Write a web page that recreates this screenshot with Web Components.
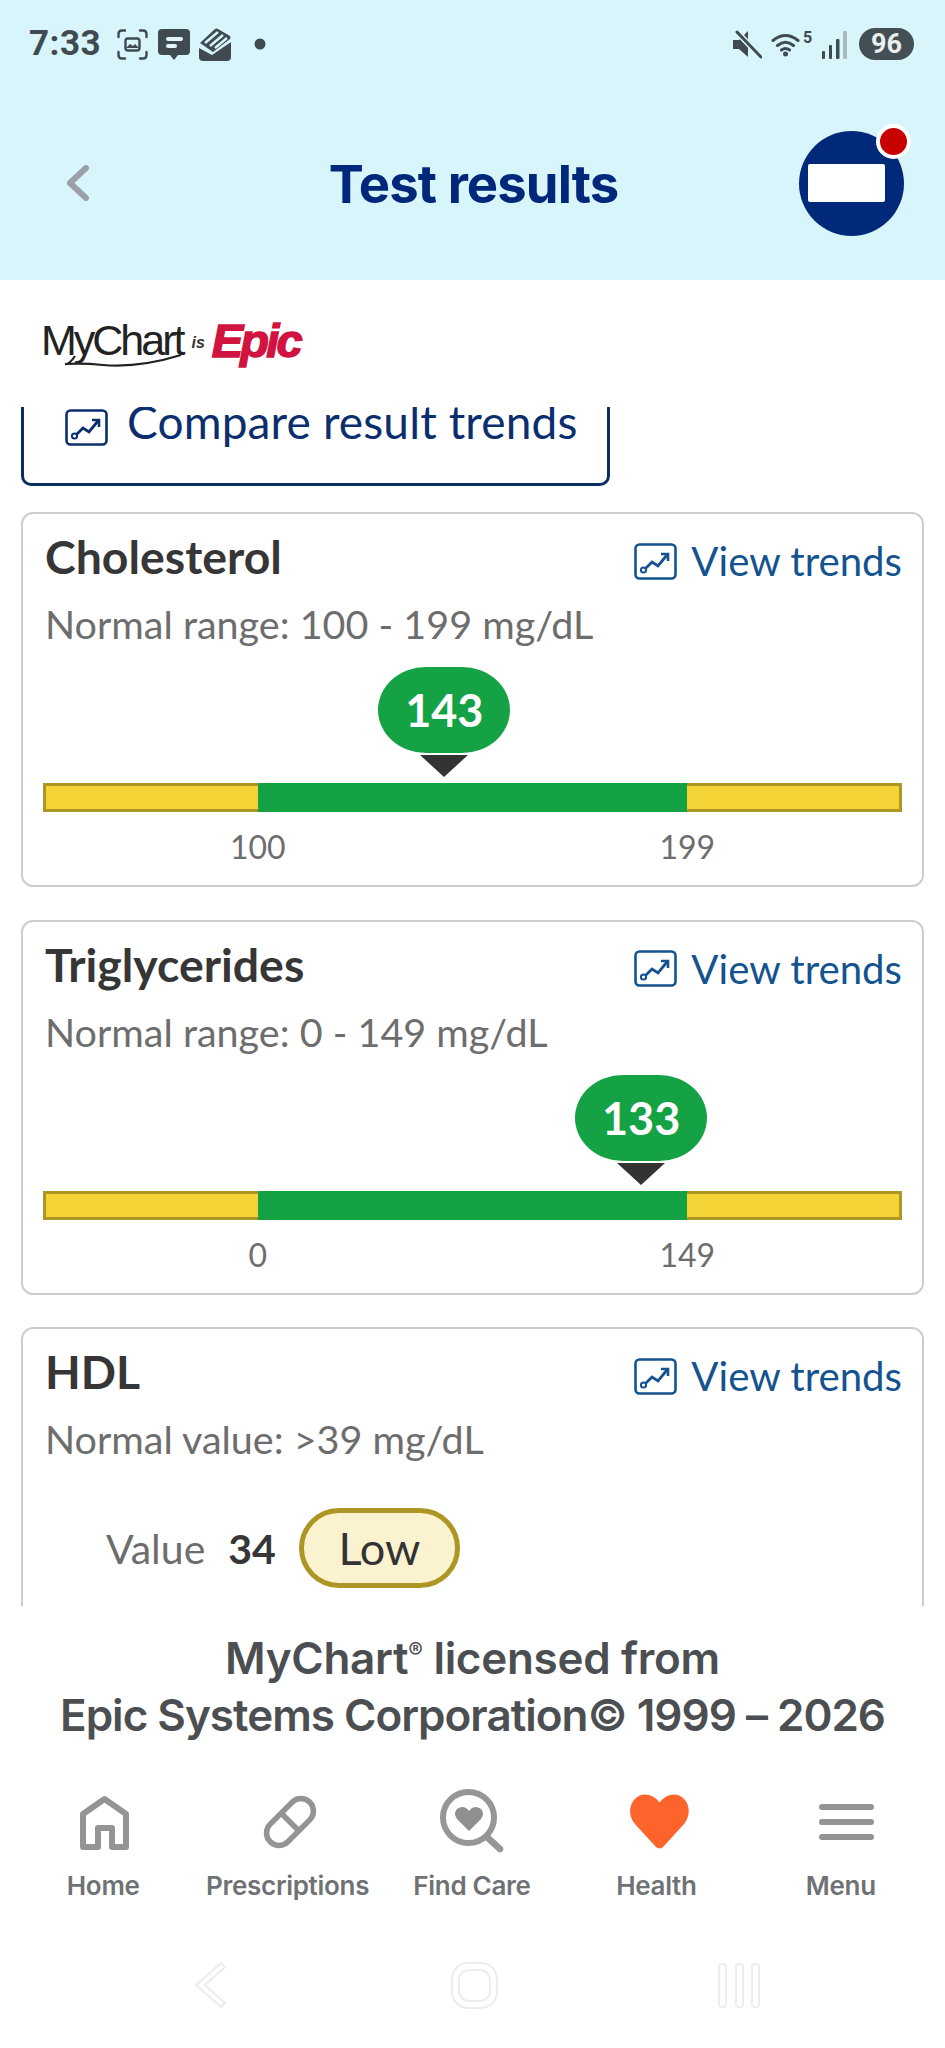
<!DOCTYPE html>
<html lang="en"><head><meta charset="utf-8"><title>Test results</title>
<style>
html,body{margin:0;padding:0;background:#fff}
body{width:945px;height:2048px;overflow:hidden;font-family:"Lato","Noto Sans",sans-serif}
</style></head>
<body>
<chart-screen>
  <app-header slot="header" title-text="Test results"></app-header>
  <brand-logo slot="brand"></brand-logo>
  <compare-button>Compare result trends</compare-button>
  <result-card name="Cholesterol" range="Normal range: 100 - 199 mg/dL">
    <range-gauge low="100" high="199" value="143"></range-gauge>
  </result-card>
  <result-card name="Triglycerides" range="Normal range: 0 - 149 mg/dL">
    <range-gauge low="0" high="149" value="133"></range-gauge>
  </result-card>
  <result-card name="HDL" range="Normal value: &gt;39 mg/dL">
    <value-flag value="34" flag="Low"></value-flag>
  </result-card>
  <app-footer slot="footer"></app-footer>
</chart-screen>
<script>
const TREND = `<svg viewBox="0 0 43 37" width="43" height="37" fill="none" stroke="currentColor" aria-hidden="true"><rect x="1.5" y="1.5" width="40" height="34" rx="4" stroke-width="2.6"/><path d="M11 26 L18 19 L24 23 L33 12" stroke-width="2.8"/><path d="M27 11 H34 V18" stroke-width="2.6"/><circle cx="9.5" cy="27" r="2.6" stroke-width="2" fill="#fff"/></svg>`;
function def(name, css, html, setup){
  customElements.define(name, class extends HTMLElement{
    constructor(){super();this.attachShadow({mode:'open'});}
    connectedCallback(){
      const a=n=>this.getAttribute(n)||'';
      this.shadowRoot.innerHTML=`<style>${css}</style>`+(typeof html==='function'?html(a):html);
      if(setup)setup(this.shadowRoot,a);
    }
  });
}
def('chart-screen',`
:host{display:flex;flex-direction:column;width:945px;height:2048px;overflow:hidden;background:#fff}
.scroll{height:1199px;overflow:hidden;padding:0 21px;display:flex;flex-direction:column;box-sizing:border-box;flex:none}
::slotted(compare-button){margin-top:-22px}
`,`<slot name="header"></slot><slot name="brand"></slot><div class="scroll"><slot></slot></div><slot name="footer"></slot>`);

def('status-bar',`
:host{display:flex;justify-content:space-between;align-items:center;height:32px;padding:28px 31px 0 29px;color:#3f4b51;font-family:"Roboto",sans-serif}
.l,.r{display:flex;align-items:center}
.time{font-size:35px;font-weight:700;letter-spacing:.5px;width:88px;line-height:32px}
svg{display:block;flex:none}
.five{font-size:16px;font-weight:700;margin:-14px 9px 0 3px;width:9px}
.batt{margin-left:9px;width:55px;height:32px;border-radius:16px;background:#434f55;color:#e9eeee;font-size:27px;font-weight:700;display:flex;align-items:center;justify-content:center}
`,`<div class="l"><span class="time">7:33</span>
<svg width="31" height="31" viewBox="0 0 31 31" fill="none" stroke="#3f4b51" stroke-width="2.4" stroke-linecap="round"><path d="M1.5 8V5q0-3.5 3.5-3.5h3M23 1.5h3q3.5 0 3.5 3.5v3M1.5 23v3q0 3.5 3.5 3.5h3M23 29.5h3q3.5 0 3.5-3.5v-3"/><rect x="8.5" y="9.5" width="14" height="12" rx="2.5" stroke-width="2.4"/><path d="M9 19l4-4 3 2 2-2 4 4z" fill="#3f4b51" stroke="none"/></svg>
<svg style="margin-left:10px" width="32" height="31" viewBox="0 0 32 31"><path d="M4 0h24q4 0 4 4v18q0 4-4 4h-8l-4 5-4-5H4q-4 0-4-4V4q0-4 4-4z" fill="#3f4b51"/><rect x="8" y="8" width="17" height="4" rx="2" fill="#dff5fa"/><rect x="8" y="15" width="11" height="4" rx="2" fill="#dff5fa"/></svg>
<svg style="margin-left:9px" width="33" height="33" viewBox="0 0 33 33"><path d="M0 20l13 7 19-13v15q0 4-4 4H4q-4 0-4-4z" fill="#3f4b51"/><path d="M1 15 L16 1 q2-1 3 0 L31 8 q1 2 0 3 L14 24 Z" fill="#3f4b51"/><path d="M6 15 L19 4 M11 18 L24 7 M16 20 L28 10" stroke="#d7f5fb" stroke-width="2.4"/></svg>
<svg style="margin-left:22px" width="12" height="12"><circle cx="6" cy="6" r="5.5" fill="#3f4b51"/></svg></div>
<div class="r">
<svg width="29" height="29" viewBox="0 0 29 29"><path d="M0 10h6l9-9v26l-9-8H0z" fill="#3f4b51"/><path d="M3 1 L28 27" stroke="#d7f5fb" stroke-width="6"/><path d="M4 2 L28 27" stroke="#3f4b51" stroke-width="3" stroke-linecap="round"/></svg>
<svg style="margin-left:9px" width="29" height="25" viewBox="0 0 29 25" fill="none" stroke="#3f4b51" stroke-width="3" stroke-linecap="round"><path d="M2 8.5q12.500-10 25 0M6.500 13.500q8-6.500 16 0M10.500 18q4-3 8 0"/><circle cx="14.500" cy="22" r="2.500" fill="#3f4b51" stroke="none"/></svg>
<span class="five">5</span>
<svg width="29" height="29" viewBox="0 0 29 29"><rect x="1" y="21" width="3" height="8" rx="1" fill="#3f4b51"/><rect x="8" y="15" width="3" height="14" rx="1" fill="#3f4b51"/><rect x="15" y="9" width="3.500" height="20" rx="1" fill="#3f4b51"/><rect x="22" y="1" width="4" height="28" rx="1" fill="#a7bcc1"/></svg>
<span class="batt">96</span></div>`);

def('app-header',`
:host{display:block;height:280px;background:#d7f5fb;flex:none}
.bar{display:grid;grid-template-columns:1fr auto 1fr;align-items:center;height:134px;margin-top:56px;padding:0 41px 0 43px}
.bar svg{margin-left:23px}
h1{margin:0;font:700 52.6px/1 "Inter","Open Sans",sans-serif;letter-spacing:-.9px;color:#00287a;padding-top:2px}
.av{justify-self:end;position:relative;width:105px;height:105px;border-radius:50%;background:#00297a;display:flex;align-items:center;justify-content:center}
.mask{width:77px;height:38px;background:#fff;border-radius:2px;margin-left:-11px}
.dot{position:absolute;right:-7px;top:-7px;width:27px;height:27px;border-radius:50%;background:#c90000;border:4px solid #fff}
`,a=>`<status-bar></status-bar><div class="bar">
<svg width="24" height="36" viewBox="0 0 24 36" fill="none" stroke="#9a9fa9" stroke-width="6" stroke-linecap="round" stroke-linejoin="round"><path d="M20 3 L4 18 L20 33"/></svg>
<h1>${a('title-text')}</h1>
<div class="av"><div class="mask"></div><span class="dot"></span></div></div>`);

def('brand-logo',`
:host{display:flex;align-items:center;height:127px;padding:0 0 7px 41px;flex:none;box-sizing:border-box}
.mc{position:relative;font:400 43px/1 "Liberation Sans",sans-serif;letter-spacing:-3px;color:#222}
.mc svg{position:absolute;left:24px;top:34px}
.is{font:italic 700 16px/1 "Liberation Sans",sans-serif;color:#333;margin:6px 0 0 9px}
.ep{font:italic 900 47px/1 "Liberation Sans",sans-serif;-webkit-text-stroke:1.5px #d0133f;letter-spacing:-2.800px;color:#d0133f;margin-left:7px}
`,`<span class="mc">MyChart<svg width="118" height="16" viewBox="0 0 118 16" fill="none" stroke="#222" stroke-width="2.200"><path d="M10 3q-6 9-10 8 18-1 38 1 36 3 78-10"/></svg></span><span class="is">is</span><span class="ep">Epic</span>`);

def('compare-button',`
:host{display:flex;align-items:flex-start;gap:19px;box-sizing:border-box;flex:none;width:589px;height:101px;padding:22px 0 0 41px;border:3px solid #0c2f63;border-radius:10px;color:#0b2f6e;font-size:46px;line-height:34px;margin-bottom:26px}
svg{color:#0b2f6e;margin-top:-1px;flex:none}
span{letter-spacing:.15px;margin-top:-5px}
`,`${TREND}<span><slot></slot></span>`);

def('result-card',`
:host{display:block;box-sizing:border-box;flex:none;height:375px;margin-bottom:32.5px;border:2.500px solid #cdcdcd;border-radius:12px;padding:0 20px 0 22px;color:#333;position:relative}
.head{display:flex;justify-content:space-between;align-items:flex-start;height:90px;padding-top:19px;box-sizing:border-box}
h2{margin:0;font-size:46.4px;line-height:46px;font-weight:700;color:#363636}
.link{display:flex;align-items:center;gap:14px;color:#14538f;font-size:40.2px;line-height:46px;margin-top:5px}
.range{margin:0;font-size:39.5px;line-height:46px;color:#6d6d6d;margin-top:-3px}
`,a=>`<div class="head"><h2>${a('name')}</h2><span class="link">${TREND}View trends</span></div>
<p class="range">${a('range').replace(/</g,'&lt;')}</p><slot></slot>`);

def('range-gauge',`
:host{display:block;position:relative;margin:-1px 0 0 -2px;height:190px;color:#6d6d6d;font-size:32px}
.pin{position:absolute;top:21px;width:132px;transform:translateX(-50%);display:flex;flex-direction:column;align-items:center}
.bub{width:132px;height:86px;border-radius:48px/43px;background:#14a244;color:#fff;font-size:45px;font-weight:700;display:flex;align-items:center;justify-content:center}
.tri{margin-top:2px;width:0;height:0;border-left:24px solid transparent;border-right:24px solid transparent;border-top:22px solid #333}
.bar{position:absolute;left:0;right:0;top:137px;height:29px;display:grid;grid-template-columns:1fr 2fr 1fr}
.y{background:#f3d335;border:3px solid #ad9624;box-sizing:border-box}
.y.a{border-right:0}.y.b{border-left:0}.g{background:#14a244}
.ticks{position:absolute;left:0;right:0;top:181px;display:grid;grid-template-columns:1fr 1fr;text-align:center;line-height:40px}
`,a=>{const l=+a('low'),h=+a('high'),v=+a('value');const p=25+(v-l)/(h-l)*50;
return `<div class="pin" style="left:${p}%"><div class="bub">${a('value')}</div><div class="tri"></div></div>
<div class="bar"><i class="y a"></i><i class="g"></i><i class="y b"></i></div>
<div class="ticks"><span>${a('low')}</span><span>${a('high')}</span></div>`});

def('value-flag',`
:host{display:flex;align-items:center;margin:46px 0 0 61px;font-size:41px}
.l{color:#6d6d6d}
.v{font-weight:700;color:#363636;margin-left:23px}
.f{margin-left:23px;box-sizing:border-box;width:161px;height:80px;border:5px solid #ad9624;border-radius:40px;background:#fbf2cf;color:#333;display:flex;align-items:center;justify-content:center;font-size:45px}
`,a=>`<span class="l">Value</span><span class="v">${a('value')}</span><span class="f">${a('flag')}</span>`);

def('app-footer',`
:host{display:block;flex:none;background:#fff}
.lic{margin:24px 0 0;text-align:center;font:600 44px/57px "Inter","Open Sans",sans-serif;letter-spacing:-1px;color:#4c4f52}
.one{letter-spacing:-.3px}
sup{font-size:22px;line-height:0;vertical-align:baseline;position:relative;top:-16px}
.tabs{display:grid;grid-template-columns:repeat(5,1fr);padding:0 12px 0 11px;margin-top:41px}
.ges{display:block;margin-top:59px}
svg{overflow:visible}
`,`<p class="lic"><span class="one">MyChart<sup>®</sup> licensed from</span><br>Epic Systems Corporation© 1999 – 2026</p>
<div class="tabs">
<tab-item label="Home"><svg width="60" height="66" viewBox="0 0 60 66" fill="none" stroke="#949494" stroke-width="6" stroke-linejoin="round"><path d="M10 29 L31.500 14 L53 29 V62 H39 V43 H25 V62 H10 Z"/></svg></tab-item>
<tab-item label="Prescriptions"><svg width="60" height="66" viewBox="0 0 60 66" fill="none" stroke="#949494" stroke-width="5.500"><rect x="-28" y="-12.500" width="56" height="25" rx="12.500" transform="translate(32 37) rotate(-45)"/><path d="M23 28 L41 46"/></svg></tab-item>
<tab-item label="Find Care"><svg width="70" height="66" viewBox="0 0 70 66" fill="none" stroke="#969696"><circle cx="31.500" cy="32.500" r="25.500" stroke-width="6"/><path d="M51 53 L63 64" stroke-width="6.500" stroke-linecap="round"/><path d="M32 46 L20 34 q-4-6 0-10 q7-5 12 2 q5-7 12-2 q4 4 0 10z" fill="#8f8f8f" stroke="none"/></svg></tab-item>
<tab-item label="Health"><svg width="62" height="66" viewBox="0 0 62 66"><path transform="translate(3.500 4.500)" d="M31 59 Q29 59 27 57 L6 34 C-3 22 3 6 16 5 Q25 5 31 13 Q37 5 46 5 C59 6 65 22 56 34 L35 57 Q33 59 31 59 Z" fill="#fd642c"/></svg></tab-item>
<tab-item label="Menu"><svg width="60" height="66" viewBox="0 0 60 66" fill="#949494"><rect x="8" y="19" width="55" height="6" rx="3"/><rect x="8" y="34" width="55" height="6" rx="3"/><rect x="8" y="49" width="55" height="6" rx="3"/></svg></tab-item>
</div>
<svg class="ges" width="945" height="50" viewBox="0 0 945 50" fill="none" stroke="#ededed" stroke-width="2"><path d="M221 3 L196 25 L221 47 L225 43 L205 25 L225 7 Z" stroke-linejoin="round"/><rect x="452" y="3" width="45" height="45" rx="16"/><rect x="459" y="10" width="31" height="31" rx="10"/><rect x="719" y="4" width="7" height="43" rx="3"/><rect x="736" y="4" width="7" height="43" rx="3"/><rect x="752" y="4" width="7" height="43" rx="3"/></svg>`);

def('tab-item',`
:host{display:flex;flex-direction:column;align-items:center;color:#6f7275}
.i{height:66px;display:flex;align-items:center;justify-content:center}
.t{font:600 26px/30px "Inter","Open Sans",sans-serif;letter-spacing:-.3px;margin-top:20px;white-space:nowrap}
`,a=>`<div class="i"><slot></slot></div><span class="t">${a('label')}</span>`);
</script>
</body></html>
